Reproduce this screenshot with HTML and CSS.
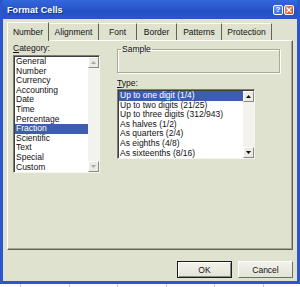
FILE: index.html
```html
<!DOCTYPE html>
<html lang="en">
<head>
    <meta charset="UTF-8">
    <meta name="viewport" content="width=device-width, initial-scale=1.0">
    <title>Format Cells</title>
    <link rel="stylesheet" href="styles.css">
</head>
<body>
    <div class="window">
        <div class="titlebar">
            <span class="title">Format Cells</span>
            <span class="caption-btns">
                <span class="cap-btn help">?</span>
                <span class="cap-btn close">
                    <svg width="6" height="6" viewBox="0 0 6 6"><path d="M0.5 0.5 L5.5 5.5 M5.5 0.5 L0.5 5.5" stroke="#fff" stroke-width="1.4"/></svg>
                </span>
            </span>
        </div>

        <div class="client">
            <div class="tabs">
                <div class="tab active" style="width: 42px">Number</div>
                <div class="tab" style="width: 50px">Alignment</div>
                <div class="tab" style="width: 38px">Font</div>
                <div class="tab" style="width: 40px">Border</div>
                <div class="tab" style="width: 45px">Patterns</div>
                <div class="tab" style="width: 50px">Protection</div>
            </div>

            <div class="panel">
                <div class="col-left">
                    <div class="label"><u>C</u>ategory:</div>
                    <div class="listbox category">
                        <ul class="items">
                            <li>General</li>
                            <li>Number</li>
                            <li>Currency</li>
                            <li>Accounting</li>
                            <li>Date</li>
                            <li>Time</li>
                            <li>Percentage</li>
                            <li class="selected">Fraction</li>
                            <li>Scientific</li>
                            <li>Text</li>
                            <li>Special</li>
                            <li>Custom</li>
                        </ul>
                        <div class="scrollbar disabled">
                            <span class="arrow"><svg width="5" height="3" viewBox="0 0 5 3"><polygon points="2.5,0 5,3 0,3"/></svg></span>
                            <span class="track"></span>
                            <span class="arrow"><svg width="5" height="3" viewBox="0 0 5 3"><polygon points="0,0 5,0 2.5,3"/></svg></span>
                        </div>
                    </div>
                </div>

                <div class="col-right">
                    <fieldset class="sample">
                        <legend>Sample</legend>
                    </fieldset>
                    <div class="label type-label"><u>T</u>ype:</div>
                    <div class="listbox type">
                        <ul class="items">
                            <li class="selected">Up to one digit (1/4)</li>
                            <li>Up to two digits (21/25)</li>
                            <li>Up to three digits (312/943)</li>
                            <li>As halves (1/2)</li>
                            <li>As quarters (2/4)</li>
                            <li>As eighths (4/8)</li>
                            <li>As sixteenths (8/16)</li>
                        </ul>
                        <div class="scrollbar">
                            <span class="arrow"><svg width="5" height="3" viewBox="0 0 5 3"><polygon points="2.5,0 5,3 0,3"/></svg></span>
                            <span class="track"></span>
                            <span class="arrow"><svg width="5" height="3" viewBox="0 0 5 3"><polygon points="0,0 5,0 2.5,3"/></svg></span>
                        </div>
                    </div>
                </div>
            </div>

            <div class="buttons">
                <button class="btn default">OK</button>
                <button class="btn">Cancel</button>
            </div>
        </div>
    </div>
    <div class="sheet"></div>
</body>
</html>
```

FILE: styles.css
```css
* {
    box-sizing: border-box;
}

body {
    margin: 0;
    width: 300px;
    height: 287px;
    overflow: hidden;
    background-color: #fff;
    font-family: "Liberation Sans", Arial, sans-serif;
    font-size: 8.5px;
    color: #111;
}

.window {
    width: 300px;
    height: 284px;
    padding: 0 3px 3px;
    background-color: #2a57cc;
    display: flex;
    flex-direction: column;
}

/* barra de título */
.titlebar {
    height: 19px;
    display: flex;
    align-items: center;
    justify-content: space-between;
    padding: 0 3px 0 4px;
    background: linear-gradient(#3467dc, #2452c6 60%, #2a57cc);
}

.title {
    color: #fff;
    font-weight: bold;
    font-size: 9px;
    letter-spacing: 0.1px;
    text-shadow: 1px 1px 0 #15338a;
}

.caption-btns {
    display: flex;
    gap: 1px;
}

.cap-btn {
    width: 10px;
    height: 10px;
    border: 1px solid #fff;
    border-radius: 2px;
    display: flex;
    align-items: center;
    justify-content: center;
    color: #fff;
    font-weight: bold;
    font-size: 8px;
}

.cap-btn.help {
    background: linear-gradient(135deg, #6d95ef, #3565d8);
}

.cap-btn.close {
    background: linear-gradient(135deg, #ee8a63, #d6431d);
}

.client {
    flex: 1;
    background-color: #dfe2cf;
    padding: 2px 4px 3px;
    display: flex;
    flex-direction: column;
}

/* abas */
.tabs {
    display: flex;
    height: 19px;
    align-items: flex-end;
}

.tab {
    height: 17px;
    display: flex;
    align-items: center;
    justify-content: center;
    border-top: 1px solid #fff;
    border-right: 1px solid #5f6254;
    color: #111;
}

.tab.active {
    height: 19px;
    border-left: 1px solid #fff;
    margin-bottom: -1px;
    position: relative;
    background-color: #dfe2cf;
}

.panel {
    height: 210px;
    display: flex;
    gap: 17px;
    padding: 1px 0 0 5px;
    border-top: 1px solid #fff;
    border-left: 1px solid #fff;
    border-right: 1px solid #5f6254;
    border-bottom: 1px solid #5f6254;
    box-shadow: inset -1px -1px 0 #a3a693;
}

.label {
    height: 12px;
    line-height: 12px;
    margin-bottom: 1px;
}

.col-left {
    width: 87px;
}

.col-right {
    width: 163px;
    padding-top: 1px;
}

/* listas */
.listbox {
    display: flex;
    background-color: #fff;
    border-top: 1px solid #7d7d76;
    border-left: 1px solid #7d7d76;
    border-right: 1px solid #f4f4f0;
    border-bottom: 1px solid #f4f4f0;
    box-shadow: inset 1px 1px 0 #3e3e3a;
}

.listbox.category {
    height: 118px;
}

.listbox.type {
    width: 138px;
    height: 70px;
}

.items {
    list-style: none;
    margin: 0;
    padding: 1px 0 0 1px;
    flex: 1;
    overflow: hidden;
}

.items li {
    height: 9.6px;
    line-height: 9.6px;
    padding-left: 1px;
    white-space: nowrap;
}

.items li.selected {
    background-color: #3d5eae;
    color: #fff;
}

.scrollbar {
    width: 11px;
    display: flex;
    flex-direction: column;
    padding-top: 1px;
}

.arrow {
    height: 11px;
    display: flex;
    align-items: center;
    justify-content: center;
    background-color: #ecebe3;
    border-top: 1px solid #fff;
    border-left: 1px solid #fff;
    border-right: 1px solid #8a8a82;
    border-bottom: 1px solid #8a8a82;
}

.arrow svg {
    fill: #111;
}

.scrollbar.disabled .arrow svg {
    fill: #a9a9a0;
}

.track {
    flex: 1;
    background-color: #f3f2ec;
}

/* grupo de exemplo */
.sample {
    margin: 1px 0 0;
    height: 29px;
    width: 163px;
    padding: 0 0 0 3px;
    border: 1px solid #a6a995;
    box-shadow: 1px 1px 0 #fff, inset 1px 1px 0 #fff;
}

.sample legend {
    padding: 0 1px;
    line-height: 10px;
}

.type-label {
    margin-top: 5px;
    height: 10px;
    line-height: 10px;
    margin-bottom: 1px;
}

/* botões */
.buttons {
    display: flex;
    justify-content: flex-end;
    gap: 6px;
    margin-top: 11px;
}

.btn {
    width: 55px;
    height: 17px;
    padding: 0;
    font-family: inherit;
    font-size: 8.5px;
    color: #111;
    background: linear-gradient(#f2f2ea, #e3e4d8);
    border-top: 1px solid #fff;
    border-left: 1px solid #fff;
    border-right: 1px solid #6e7063;
    border-bottom: 1px solid #6e7063;
}

.btn.default {
    border: 1px solid #1c1c1a;
    box-shadow: inset 1px 1px 0 #fff, inset -1px -1px 0 #8a8c7e;
}

.sheet {
    height: 3px;
    background-color: #fff;
    background-image: repeating-linear-gradient(90deg, transparent 0 20px, #c8c8c8 20px 21px, transparent 21px 48.5px);
}
```
